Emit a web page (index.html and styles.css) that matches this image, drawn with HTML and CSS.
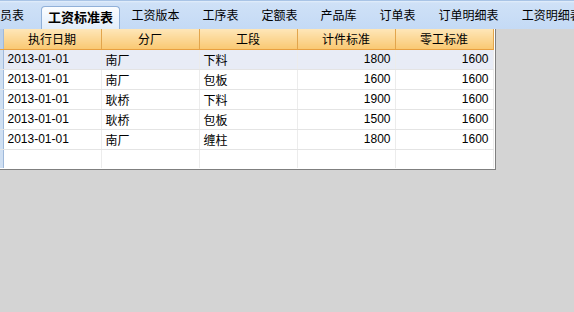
FILE: index.html
```html
<!DOCTYPE html>
<html lang="zh">
<head>
    <meta charset="UTF-8">
    <title>工资标准表</title>
    <link rel="stylesheet" href="styles.css">
</head>
<body>
    <div class="tabbar">
        <div class="tab first">员表</div>
        <div class="tab active">工资标准表</div>
        <div class="tab">工资版本</div>
        <div class="tab">工序表</div>
        <div class="tab">定额表</div>
        <div class="tab">产品库</div>
        <div class="tab">订单表</div>
        <div class="tab">订单明细表</div>
        <div class="tab">工资明细表</div>
    </div>
    <div class="grid">
        <table>
            <thead>
                <tr>
                    <th class="ind"></th>
                    <th>执行日期</th>
                    <th>分厂</th>
                    <th>工段</th>
                    <th>计件标准</th>
                    <th>零工标准</th>
                </tr>
            </thead>
            <tbody>
                <tr class="current">
                    <td class="ind"></td><td>2013-01-01</td><td>南厂</td><td>下料</td><td class="num">1800</td><td class="num">1600</td>
                </tr>
                <tr>
                    <td class="ind"></td><td>2013-01-01</td><td>南厂</td><td>包板</td><td class="num">1600</td><td class="num">1600</td>
                </tr>
                <tr>
                    <td class="ind"></td><td>2013-01-01</td><td>耿桥</td><td>下料</td><td class="num">1900</td><td class="num">1600</td>
                </tr>
                <tr>
                    <td class="ind"></td><td>2013-01-01</td><td>耿桥</td><td>包板</td><td class="num">1500</td><td class="num">1600</td>
                </tr>
                <tr>
                    <td class="ind"></td><td>2013-01-01</td><td>南厂</td><td>缠柱</td><td class="num">1800</td><td class="num">1600</td>
                </tr>
                <tr class="blank">
                    <td class="ind"></td><td></td><td></td><td></td><td></td><td></td>
                </tr>
            </tbody>
        </table>
    </div>
</body>
</html>
```

FILE: styles.css
```css
body{
    margin: 0;
    background: #d4d4d4;
    font-family: "Liberation Sans", "Noto Sans CJK SC", sans-serif;
    font-size: 12px;
    color: #000;
}

/* tab strip on top */
.tabbar{
    height: 29px;
    display: flex;
    align-items: flex-end;
    overflow: hidden;
    white-space: nowrap;
    background: linear-gradient(#e3eefb 0, #cfe1f7 2px, #c4daf5 100%);
    border-top: 1px solid #a9c4e6;
    box-sizing: border-box;
}

.tab{
    flex: none;
    height: 23px;
    line-height: 21px;
    padding: 0 11.5px;
    font-size: 12px;
}

.tab.first{
    padding: 0 12px;
    margin-left: -12px;
}

.tab.active{
    height: 22px;
    margin-left: 5px;
    padding: 0 6px 0 6px;
    font-size: 13px;
    font-weight: bold;
    line-height: 21px;
    background: linear-gradient(#fbfdff, #e2edfa);
    border: 1px solid #90b0d8;
    border-bottom: none;
    border-radius: 4px 4px 0 0;
}

/* data grid */
.grid{
    width: 496px;
    height: 141px;
    background: #fff;
    border-right: 1px solid #7f7f7f;
    border-bottom: 1px solid #7f7f7f;
    box-sizing: border-box;
    overflow: hidden;
}

table{
    border-collapse: collapse;
    table-layout: fixed;
}

th{
    width: 98px;
    height: 20px;
    padding: 0;
    font-weight: normal;
    background: linear-gradient(#fee6b8, #f9c872);
    border-right: 1px solid #e2a54c;
    border-bottom: 1px solid #e8a040;
    box-sizing: border-box;
}

td{
    height: 20px;
    padding: 0 4px;
    border-right: 1px solid #ececec;
    border-bottom: 1px solid #e4e4e4;
    box-sizing: border-box;
}

.ind{
    width: 3px;
    padding: 0;
    background: #cfdff2;
    border-right: 1px solid #9fb9da;
}

th.ind{
    background: #b9cfea;
}

.num{
    text-align: right;
}

tr.current td{
    background: #e8ecf6;
}

tr.current td.ind{
    background: #cfdff2;
}

tr.blank td{
    height: 19px;
    border-bottom: none;
}
```
